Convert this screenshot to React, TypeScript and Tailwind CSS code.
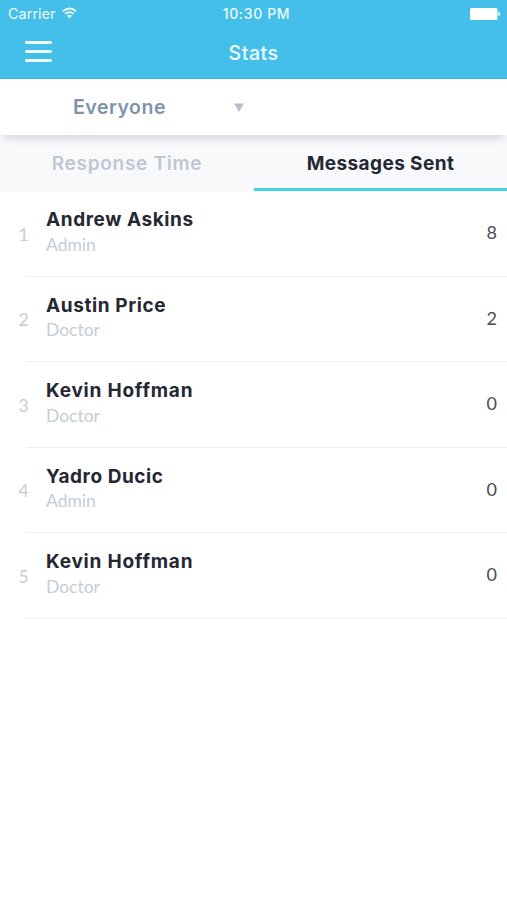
type Person = { name: string; role: string; sent: number; tracking: string };

const people: Person[] = [
  { name: "Andrew Askins", role: "Admin", sent: 8, tracking: "tracking-[0.57px]" },
  { name: "Austin Price", role: "Doctor", sent: 2, tracking: "tracking-[0.6px]" },
  { name: "Kevin Hoffman", role: "Doctor", sent: 0, tracking: "tracking-[0.78px]" },
  { name: "Yadro Ducic", role: "Admin", sent: 0, tracking: "tracking-[0.55px]" },
  { name: "Kevin Hoffman", role: "Doctor", sent: 0, tracking: "tracking-[0.78px]" },
];

function WifiIcon() {
  return (
    <svg width="15" height="12" viewBox="0 0 16 12" fill="none" stroke="#e9f9ff" strokeWidth="2" className="mb-[1px]">
      <path d="M1 4.2C5 .2 11 .2 15 4.2" />
      <path d="M3.5 7C6.2 4.4 9.8 4.4 12.5 7" />
      <path d="M8 11.5 5.3 8.9C6.8 7.5 9.2 7.5 10.7 8.9Z" fill="#e9f9ff" stroke="none" />
    </svg>
  );
}

function BatteryIcon() {
  return (
    <svg width="31" height="12" viewBox="0 0 31 12" fill="#fff">
      <rect width="27.5" height="12" rx="1.6" />
      <path d="M28.3 4c1.4.2 2 1 2 2s-.6 1.8-2 2Z" />
    </svg>
  );
}

function Header() {
  return (
    <header className="h-[79px] border-b border-[#3bb9e5] bg-[#44bfea] text-[#eefaff]">
      <div className="grid h-[27px] grid-cols-3 items-center pr-[6px] pl-[8px]">
        <div className="flex items-center gap-[6px] text-[14.5px] leading-none">
          <span className="pt-[1px]">Carrier</span>
          <WifiIcon />
        </div>
        <div className="pl-[4px] text-center text-[14px] leading-none font-medium tracking-[0.65px] whitespace-nowrap">10:30 PM</div>
        <div className="flex justify-end"><BatteryIcon /></div>
      </div>
      <div className="grid h-[51px] grid-cols-3 items-center pl-[25px] pr-[25px]">
        <button aria-label="Menu" className="mb-[2px] flex w-[27px] flex-col gap-[6px]">
          <span className="h-[3px] rounded-full bg-[#eefaff]" />
          <span className="h-[3px] rounded-full bg-[#eefaff]" />
          <span className="h-[3px] rounded-full bg-[#eefaff]" />
        </button>
        <h1 className="pt-[3px] text-center text-[19.5px] leading-none font-medium tracking-[0.5px]">Stats</h1>
      </div>
    </header>
  );
}

export default function App() {
  return (
    <main className="min-h-[900px] w-full overflow-hidden bg-white font-['Inter','Liberation_Sans',sans-serif]">
      <Header />
      <section className="relative flex h-[56px] items-center bg-white pl-[73px] shadow-[0_6px_9px_-4px_rgba(35,45,50,0.22)]">
        <span className="w-[161px] pt-[2px] text-[19.5px] leading-none font-semibold tracking-[0.5px] text-[#8093aa]">Everyone</span>
        <svg width="10" height="9" viewBox="0 0 10 9" fill="#b5c0cb"><path d="M0 .5h10L5 9Z" /></svg>
      </section>
      <nav className="flex h-[56px] bg-[#f7f9fb] text-[19px] font-semibold">
        <button className="w-[254px] pt-[2px] tracking-[0.72px] text-[#bfc8d3]">Response Time</button>
        <button className="flex-1 border-b-[3px] border-[#42d7df] pt-[5px] font-bold tracking-[0.4px] text-[#242833]">Messages Sent</button>
      </nav>
      <ol>
        {people.map((person, index) => (
          <li key={index} className="flex h-[85.5px]">
            <span className="w-[26px] pt-[33.5px] pl-[18.5px] font-['Lato',sans-serif] text-[17.5px] leading-[20px] text-[#c5cdd5]">{index + 1}</span>
            <div className="flex flex-1 border-b-[1.5px] border-[#eceeef] pl-[20px] pr-[10px]">
              <div className="flex-1 pt-[17px]">
                <h2 className={`text-[19px] leading-[24px] font-bold text-[#242833] ${person.tracking}`}>{person.name}</h2>
                <p className="pt-[2.5px] font-['Lato',sans-serif] text-[17.5px] leading-[20px] text-[#c5cdd5]">{person.role}</p>
              </div>
              <span className="pt-[31.4px] font-['Lato',sans-serif] text-[18px] leading-[20px] text-[#484b52]">{person.sent}</span>
            </div>
          </li>
        ))}
      </ol>
    </main>
  );
}
